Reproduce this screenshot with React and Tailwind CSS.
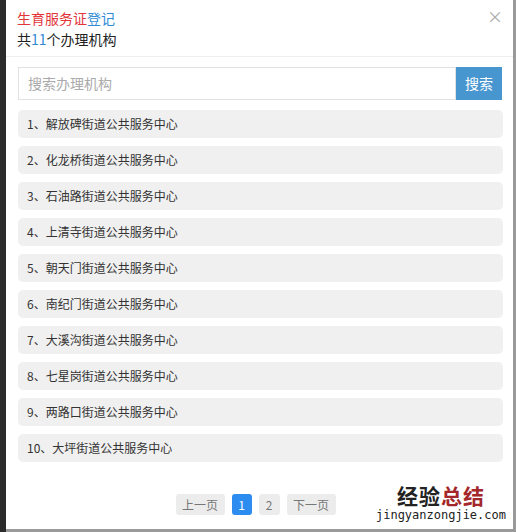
import React from 'react';

const font = { fontFamily: '"Microsoft YaHei", "Noto Sans CJK SC", "Liberation Sans", sans-serif' };

const ORGS = [
  '解放碑街道公共服务中心',
  '化龙桥街道公共服务中心',
  '石油路街道公共服务中心',
  '上清寺街道公共服务中心',
  '朝天门街道公共服务中心',
  '南纪门街道公共服务中心',
  '大溪沟街道公共服务中心',
  '七星岗街道公共服务中心',
  '两路口街道公共服务中心',
  '大坪街道公共服务中心',
];

const App = () => {
  return (
    <div className="w-[516px] h-[532px] flex bg-[#2b2b2b] overflow-hidden" style={font}>
      {/* page behind the dialog */}
      <div className="w-[6px] shrink-0" />

      {/* dialog */}
      <div className="relative flex-1 flex flex-col bg-white border-r-[3px] border-b-[3px] border-[#9a9a9a]">
        {/* Header */}
        <div className="h-[57px] shrink-0 border-b border-[#eeeeee] pl-[11px] pt-[8px]">
          <p className="text-[14px] leading-[21px]">
            <span className="text-[#e2353a]">生育服务证</span>
            <span className="text-[#2f8bd6]">登记</span>
          </p>
          <p className="text-[14px] leading-[21px] text-[#222]">
            共<span className="text-[#2f8bd6]">11</span>个办理机构
          </p>
          <button className="absolute right-[10px] top-[8px] text-[16px] leading-[16px] text-[#aaa]">×</button>
        </div>

        {/* Search */}
        <div className="flex mt-[10px] ml-[12px] mr-[11px] h-[33px]">
          <input
            placeholder="搜索办理机构"
            className="flex-1 min-w-0 border border-[#e2e2e2] px-[9px] text-[14px] text-[#333] placeholder-[#aaaaaa] outline-none"
          />
          <button className="w-[46px] shrink-0 bg-[#4896d0] text-white text-[14px]">搜索</button>
        </div>

        {/* List */}
        <ul className="flex flex-col gap-[8px] mt-[10px] ml-[12px] mr-[10px]">
          {ORGS.map((name, i) => (
            <li
              key={name}
              className="h-[28px] flex items-center rounded-[5px] bg-[#f0f0f0] pl-[9px] text-[12px] text-[#333]"
            >
              {i + 1}、{name}
            </li>
          ))}
        </ul>

        {/* Pagination */}
        <div className="flex justify-center gap-[7px] mt-[32px] pr-[8px] text-[12px]">
          <button className="h-[21px] w-[49px] rounded-[3px] bg-[#ececec] text-[#777]">上一页</button>
          <button className="h-[21px] w-[20px] rounded-[3px] bg-[#2d8cf0] text-white">1</button>
          <button className="h-[21px] w-[21px] rounded-[3px] bg-[#ececec] text-[#777]">2</button>
          <button className="h-[21px] w-[49px] rounded-[3px] bg-[#ececec] text-[#777]">下一页</button>
        </div>

        {/* watermark */}
        <div className="absolute right-[7px] bottom-[6px] flex flex-col items-center">
          <span className="text-[21px] leading-[24px] font-bold tracking-[1px]">
            <span className="text-[#222]">经验</span>
            <span className="text-[#a3272b]">总结</span>
          </span>
          <span className="text-[12px] leading-[16px] text-[#222]" style={{ fontFamily: '"DejaVu Sans Mono", monospace' }}>
            jingyanzongjie.com
          </span>
        </div>
      </div>
    </div>
  );
};

export default App;
